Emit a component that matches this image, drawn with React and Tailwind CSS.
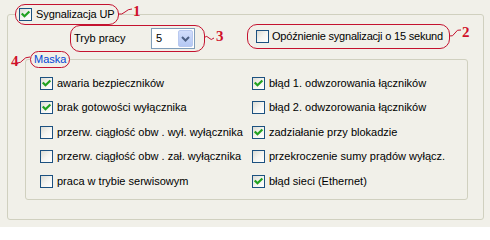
import React from "react";

function Check({ checked }) {
  return (
    <span className="relative inline-block w-[13px] h-[13px] shrink-0 border border-[#1c5180] bg-gradient-to-br from-[#dcdcd4] via-[#f4f4f0] to-white">
      {checked && (
        <svg className="absolute left-0 top-0" width="11" height="11" viewBox="0 0 11 11">
          <path d="M2.5 5.2 L4.5 7.3 L8.6 3.2" fill="none" stroke="#21a121" strokeWidth="2.2" strokeLinecap="square" />
        </svg>
      )}
    </span>
  );
}

const left = [
  ["awaria bezpieczników", true],
  ["brak gotowości wyłącznika", true],
  ["przerw. ciągłość obw . wył. wyłącznika", false],
  ["przerw. ciągłość obw . zał. wyłącznika", false],
  ["praca w trybie serwisowym", false],
];
const right = [
  ["błąd 1. odwzorowania łączników", true],
  ["błąd 2. odwzorowania łączników", false],
  ["zadziałanie przy blokadzie", true],
  ["przekroczenie sumy prądów wyłącz.", false],
  ["błąd sieci (Ethernet)", true],
];

function Item({ label, checked }) {
  return (
    <div className="flex items-center gap-[4px] h-[24.5px] whitespace-nowrap">
      <Check checked={checked} />
      <span>{label}</span>
    </div>
  );
}

export default function App() {
  return (
    <div
      className="relative w-[490px] h-[227px] bg-[#f1f0e9] pt-[4px] pl-[7px] text-[11px] leading-[13px] text-black overflow-hidden"
      style={{ fontFamily: '"Liberation Sans", Arial, sans-serif' }}
    >
      <fieldset className="w-[477px] h-[216px] border border-[#d0d0bf] rounded-[3px]">
        <legend className="ml-[7px]">
          <span className="flex items-center gap-[3px] w-[104px] h-[21px] pl-[3px] border border-[#c4122f] rounded-[10px] whitespace-nowrap">
            <Check checked />
            <span className="ml-[1px] tracking-[-0.1px]">Sygnalizacja UP</span>
          </span>
        </legend>

        <div className="flex items-start h-[26px]">
          <div className="flex items-center ml-[62px] w-[135px] h-[27px] pl-[3px] border border-[#c4122f] rounded-[10px]">
            <span className="w-[77px]">Tryb pracy</span>
            <div className="flex items-center w-[44px] h-[21px] border border-[#7f9db9] bg-white pl-[4px] pr-[1px]">
              <span className="flex-1">5</span>
              <span className="flex items-center justify-center w-[15px] h-[17px] rounded-[2px] border border-[#b9c9ef] bg-gradient-to-b from-[#d2defb] to-[#b5c8f4]">
                <svg width="9" height="6" viewBox="0 0 9 6">
                  <path d="M1 1 L4.5 4.5 L8 1" fill="none" stroke="#4d6185" strokeWidth="2" />
                </svg>
              </span>
            </div>
          </div>
          <div className="flex items-center gap-[3px] ml-[42px] mt-[-1px] w-[203px] h-[25px] pl-[8px] border border-[#c4122f] rounded-[10px] whitespace-nowrap">
            <Check checked={false} />
            <span className="tracking-[-0.2px]">Opóźnienie sygnalizacji o 15 sekund</span>
          </div>
        </div>

        <fieldset className="ml-[17px] w-[443px] h-[149px] border border-[#d0d0bf] rounded-[3px]">
          <legend className="ml-[4px]">
            <span className="flex items-center w-[40px] h-[17px] pl-[3px] border border-[#c4122f] rounded-[9px] text-[#0046d5]">
              Maska
            </span>
          </legend>
          <div className="grid grid-cols-[212px_1fr] pl-[14px] pt-[3px]">
            <div className="flex flex-col">
              {left.map(([l, c]) => (
                <Item key={l} label={l} checked={c} />
              ))}
            </div>
            <div className="flex flex-col">
              {right.map(([l, c]) => (
                <Item key={l} label={l} checked={c} />
              ))}
            </div>
          </div>
        </fieldset>
      </fieldset>

      <svg className="absolute left-0 top-0 pointer-events-none" width="490" height="227" viewBox="0 0 490 227">
        <g fill="none" stroke="#c4122f" strokeWidth="1">
          <path d="M118 14 Q122 15 125 12 T132 9" />
          <path d="M449 36 Q453 37 455 33 T461 30" />
          <path d="M204 37.5 Q207 35 209 38 T214 38" />
          <path d="M17 63 Q21 63 23 60 T30 57" />
        </g>
      </svg>
      <span className="absolute left-[133px] top-[4px] text-[15px] leading-[15px] font-bold text-[#d0102a]" style={{ fontFamily: '"Liberation Serif", serif' }}>1</span>
      <span className="absolute left-[462px] top-[25px] text-[15px] leading-[15px] font-bold text-[#d0102a]" style={{ fontFamily: '"Liberation Serif", serif' }}>2</span>
      <span className="absolute left-[216px] top-[29px] text-[15px] leading-[15px] font-bold text-[#d0102a]" style={{ fontFamily: '"Liberation Serif", serif' }}>3</span>
      <span className="absolute left-[11px] top-[54px] text-[15px] leading-[15px] font-bold text-[#d0102a]" style={{ fontFamily: '"Liberation Serif", serif' }}>4</span>
    </div>
  );
}
